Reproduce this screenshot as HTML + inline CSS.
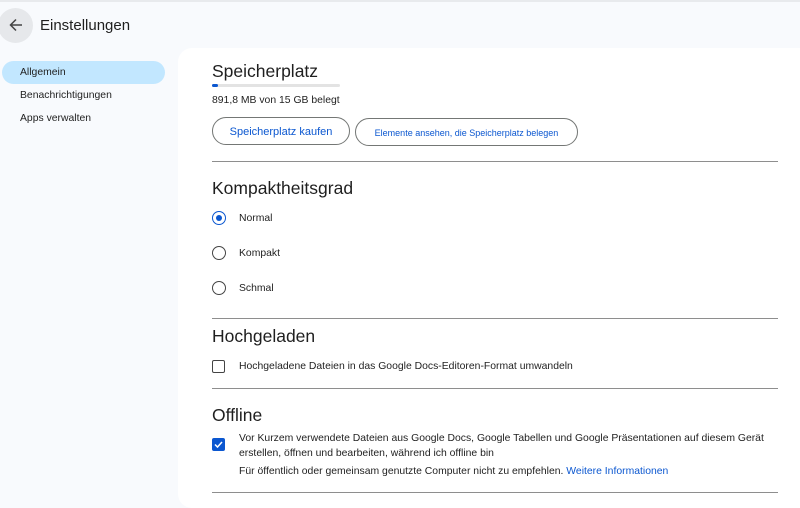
<!DOCTYPE html>
<html><head><meta charset="utf-8"><style>
*{margin:0;padding:0;box-sizing:border-box}
body{width:800px;height:497px;overflow:hidden;background:#f8fafd;font-family:"Liberation Sans",Arial,sans-serif;color:#1f1f1f;position:relative}
.a{position:absolute;white-space:nowrap}
.panel{position:absolute;left:178px;top:48px;width:640px;height:460px;background:#fff;border-radius:14px}
.h{font-size:17.5px;color:#1f1f1f}
.t{font-size:10.4px;color:#1f1f1f}
.hr{position:absolute;left:212px;width:566px;height:1px;background:#8e8e8e}
.btn{position:absolute;height:28px;border:1px solid #747775;border-radius:14px;color:#0b57d0;text-align:center;line-height:28px;background:#fff}
.radio{position:absolute;width:14px;height:14px;border:1.5px solid #444;border-radius:50%}
</style></head><body>
<div class="a" style="left:0;top:0;width:800px;height:2px;background:#e8eaed"></div>
<div class="a" style="left:-2px;top:8px;width:35px;height:35px;border-radius:50%;background:#e6e8eb"></div>
<svg class="a" style="left:9px;top:18px" width="14" height="14" viewBox="0 0 14 14"><path d="M13 7H2M7 1.5L1.5 7L7 12.5" stroke="#444" stroke-width="1.5" fill="none"/></svg>
<div class="a" style="left:40px;top:17px;font-size:15px;color:#1f1f1f">Einstellungen</div>
<div class="a" style="left:2px;top:61px;width:163px;height:23px;border-radius:12px;background:#c2e7ff"></div>
<div class="a t" style="left:20px;top:67px">Allgemein</div>
<div class="a t" style="left:20px;top:90px">Benachrichtigungen</div>
<div class="a t" style="left:20px;top:113px">Apps verwalten</div>
<div class="panel"></div>
<div class="a h" style="left:212px;top:61px">Speicherplatz</div>
<div class="a" style="left:212px;top:84px;width:128px;height:3px;background:#e3e3e3;border-radius:2px"></div>
<div class="a" style="left:212px;top:84px;width:6px;height:3px;background:#0b57d0;border-radius:2px"></div>
<div class="a t" style="left:212px;top:95px">891,8 MB von 15 GB belegt</div>
<div class="btn" style="left:212px;top:117px;width:138px;font-size:11px">Speicherplatz kaufen</div>
<div class="btn" style="left:355px;top:118px;width:223px;font-size:9px">Elemente ansehen, die Speicherplatz belegen</div>
<div class="hr" style="top:161px"></div>
<div class="a h" style="left:212px;top:178px">Kompaktheitsgrad</div>
<div class="radio" style="left:212px;top:211px;border-color:#0b57d0"></div>
<div class="a" style="left:216px;top:215px;width:6px;height:6px;border-radius:50%;background:#0b57d0"></div>
<div class="a t" style="left:239px;top:213px">Normal</div>
<div class="radio" style="left:212px;top:246px"></div>
<div class="a t" style="left:239px;top:248px">Kompakt</div>
<div class="radio" style="left:212px;top:281px"></div>
<div class="a t" style="left:239px;top:283px">Schmal</div>
<div class="hr" style="top:318px"></div>
<div class="a h" style="left:212px;top:326px">Hochgeladen</div>
<div class="a" style="left:212px;top:360px;width:13px;height:13px;border:1.5px solid #444;border-radius:2px"></div>
<div class="a t" style="left:239px;top:361px">Hochgeladene Dateien in das Google Docs-Editoren-Format umwandeln</div>
<div class="hr" style="top:388px"></div>
<div class="a h" style="left:212px;top:405px">Offline</div>
<div class="a" style="left:212px;top:438px;width:13px;height:13px;background:#0b57d0;border-radius:2px"></div>
<svg class="a" style="left:212px;top:438px" width="13" height="13" viewBox="0 0 13 13"><path d="M3 6.5L5.5 9L10 4" stroke="#fff" stroke-width="1.5" fill="none"/></svg>
<div class="a t" style="left:239px;top:433px">Vor Kurzem verwendete Dateien aus Google Docs, Google Tabellen und Google Präsentationen auf diesem Gerät</div>
<div class="a t" style="left:239px;top:448px">erstellen, öffnen und bearbeiten, während ich offline bin</div>
<div class="a t" style="left:239px;top:466px">Für öffentlich oder gemeinsam genutzte Computer nicht zu empfehlen. <span style="color:#0b57d0">Weitere Informationen</span></div>
<div class="hr" style="top:492px"></div>
</body></html>
